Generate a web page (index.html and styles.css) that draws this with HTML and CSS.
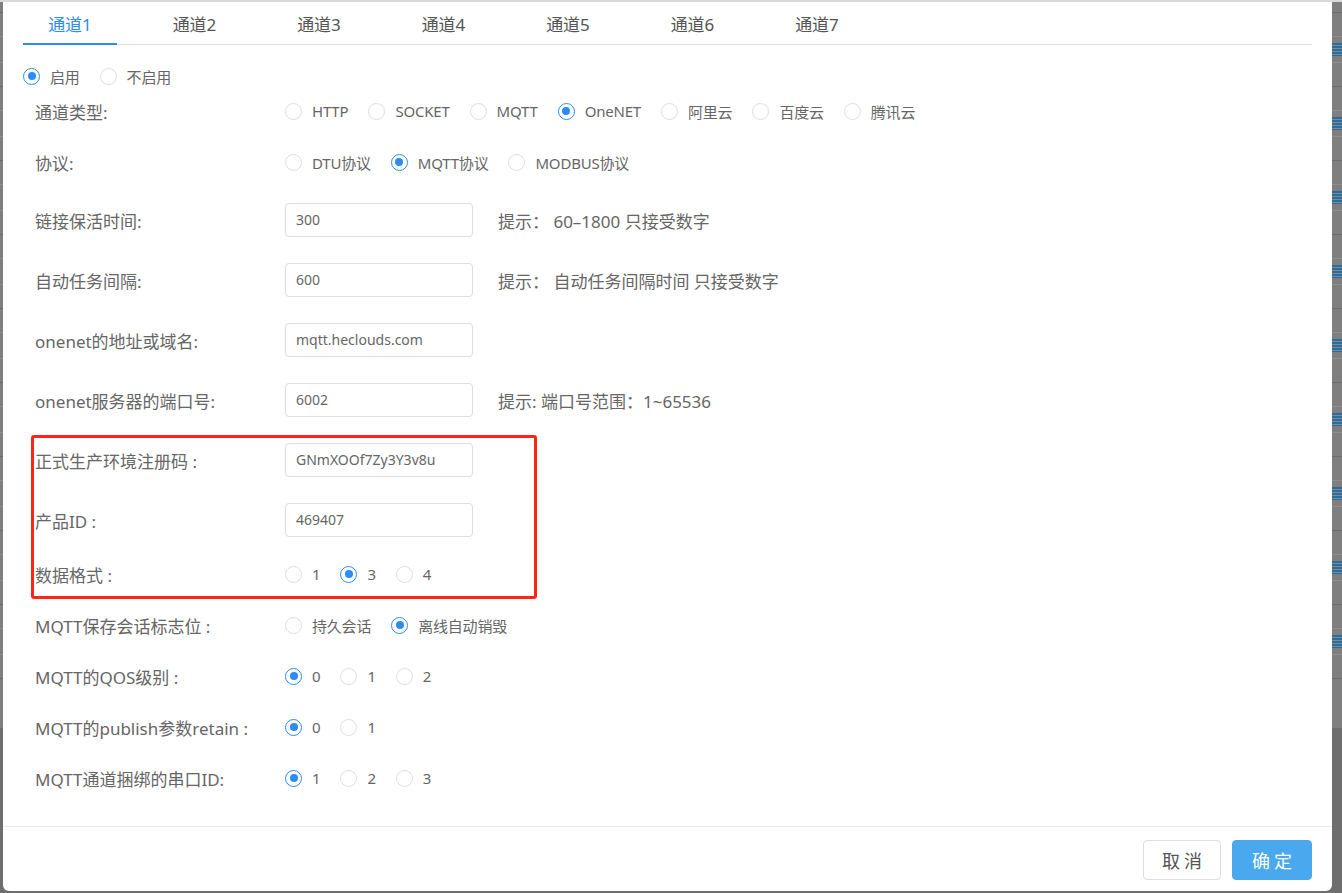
FILE: index.html
```html
<!DOCTYPE html>
<html lang="zh-CN">
<head>
<meta charset="utf-8">
<title>通道配置</title>
<link rel="stylesheet" href="styles.css">
</head>
<body>
<div class="page">
  <div class="page-top"></div>
  <div class="page-head"></div>
  <div class="bg-row"><div class="bg-cell"><span class="bg-icon"></span></div></div>
  <div class="bg-row"><div class="bg-cell"><span class="bg-icon"></span></div></div>
  <div class="bg-row"><div class="bg-cell"><span class="bg-icon"></span></div></div>
  <div class="bg-row"><div class="bg-cell"><span class="bg-icon"></span></div></div>
  <div class="bg-row"><div class="bg-cell"><span class="bg-icon"></span></div></div>
  <div class="bg-row"><div class="bg-cell"><span class="bg-icon"></span></div></div>
  <div class="bg-row"><div class="bg-cell"><span class="bg-icon"></span></div></div>
  <div class="bg-row"><div class="bg-cell"><span class="bg-icon"></span></div></div>
  <div class="bg-row"><div class="bg-cell"><span class="bg-icon"></span></div></div>
  <div class="bg-row bg-row-last"></div>
  <div class="page-foot"></div>
</div>

<div class="modal">
  <div class="modal-body">
    <div class="tabs">
      <div class="tab active">通道1</div>
      <div class="tab">通道2</div>
      <div class="tab">通道3</div>
      <div class="tab">通道4</div>
      <div class="tab">通道5</div>
      <div class="tab">通道6</div>
      <div class="tab">通道7</div>
    </div>

    <div class="enable-row">
      <label class="radio checked"><span class="circle"></span><span class="rtext">启用</span></label>
      <label class="radio"><span class="circle"></span><span class="rtext">不启用</span></label>
    </div>

    <div class="form">
      <div class="item item-radio">
        <div class="label">通道类型:</div>
        <div class="control">
          <label class="radio"><span class="circle"></span><span class="rtext">HTTP</span></label>
          <label class="radio"><span class="circle"></span><span class="rtext">SOCKET</span></label>
          <label class="radio"><span class="circle"></span><span class="rtext">MQTT</span></label>
          <label class="radio checked"><span class="circle"></span><span class="rtext">OneNET</span></label>
          <label class="radio"><span class="circle"></span><span class="rtext">阿里云</span></label>
          <label class="radio"><span class="circle"></span><span class="rtext">百度云</span></label>
          <label class="radio"><span class="circle"></span><span class="rtext">腾讯云</span></label>
        </div>
      </div>

      <div class="item item-radio item-gap">
        <div class="label">协议:</div>
        <div class="control">
          <label class="radio"><span class="circle"></span><span class="rtext">DTU协议</span></label>
          <label class="radio checked"><span class="circle"></span><span class="rtext">MQTT协议</span></label>
          <label class="radio"><span class="circle"></span><span class="rtext">MODBUS协议</span></label>
        </div>
      </div>

      <div class="item item-input">
        <div class="label">链接保活时间:</div>
        <div class="control">
          <div class="input">300</div>
          <div class="hint">提示： 60–1800 只接受数字</div>
        </div>
      </div>

      <div class="item item-input">
        <div class="label">自动任务间隔:</div>
        <div class="control">
          <div class="input">600</div>
          <div class="hint">提示： 自动任务间隔时间 只接受数字</div>
        </div>
      </div>

      <div class="item item-input">
        <div class="label">onenet的地址或域名:</div>
        <div class="control">
          <div class="input">mqtt.heclouds.com</div>
        </div>
      </div>

      <div class="item item-input">
        <div class="label">onenet服务器的端口号:</div>
        <div class="control">
          <div class="input">6002</div>
          <div class="hint">提示: 端口号范围：1~65536</div>
        </div>
      </div>

      <div class="item item-input">
        <div class="label">正式生产环境注册码 :</div>
        <div class="control">
          <div class="input">GNmXOOf7Zy3Y3v8u</div>
        </div>
      </div>

      <div class="item item-input">
        <div class="label">产品ID :</div>
        <div class="control">
          <div class="input">469407</div>
        </div>
      </div>

      <div class="item item-radio">
        <div class="label">数据格式 :</div>
        <div class="control">
          <label class="radio"><span class="circle"></span><span class="rtext">1</span></label>
          <label class="radio checked"><span class="circle"></span><span class="rtext">3</span></label>
          <label class="radio"><span class="circle"></span><span class="rtext">4</span></label>
        </div>
      </div>

      <div class="item item-radio">
        <div class="label">MQTT保存会话标志位 :</div>
        <div class="control">
          <label class="radio"><span class="circle"></span><span class="rtext">持久会话</span></label>
          <label class="radio checked"><span class="circle"></span><span class="rtext">离线自动销毁</span></label>
        </div>
      </div>

      <div class="item item-radio">
        <div class="label">MQTT的QOS级别 :</div>
        <div class="control">
          <label class="radio checked"><span class="circle"></span><span class="rtext">0</span></label>
          <label class="radio"><span class="circle"></span><span class="rtext">1</span></label>
          <label class="radio"><span class="circle"></span><span class="rtext">2</span></label>
        </div>
      </div>

      <div class="item item-radio">
        <div class="label">MQTT的publish参数retain :</div>
        <div class="control">
          <label class="radio checked"><span class="circle"></span><span class="rtext">0</span></label>
          <label class="radio"><span class="circle"></span><span class="rtext">1</span></label>
        </div>
      </div>

      <div class="item item-radio">
        <div class="label">MQTT通道捆绑的串口ID:</div>
        <div class="control">
          <label class="radio checked"><span class="circle"></span><span class="rtext">1</span></label>
          <label class="radio"><span class="circle"></span><span class="rtext">2</span></label>
          <label class="radio"><span class="circle"></span><span class="rtext">3</span></label>
        </div>
      </div>
    </div>

    <div class="highlight"></div>
  </div>

  <div class="modal-footer">
    <button class="btn">取 消</button>
    <button class="btn btn-primary">确 定</button>
  </div>
</div>
</body>
</html>
```

FILE: styles.css
```css
* { box-sizing: border-box; }

html, body {
  margin: 0;
  padding: 0;
}

body {
  width: 1342px;
  height: 893px;
  overflow: hidden;
  position: relative;
  background: #6e6e6e;
  font-family: "Noto Sans", "Noto Sans CJK SC", sans-serif;
  color: #666;
}

/* ---------- dimmed page behind the dialog ---------- */
.page {
  display: flex;
  flex-direction: column;
  width: 100%;
  background: #7f7f7f;
}
.page-top {
  height: 2px;
  background: #dadada;
}
.page-head {
  height: 10px;
}
.bg-row {
  height: 74px;
  border-top: 1px solid #6c6c6c;
  display: flex;
  flex-direction: column;
}
.bg-row-last {
  height: 50px;
}
.bg-cell {
  margin-top: 23px;
  height: 27px;
  border-top: 1px solid #8e8e8e;
  border-bottom: 1px solid #8e8e8e;
  display: flex;
  justify-content: flex-end;
  align-items: center;
}
.bg-icon {
  width: 12px;
  height: 13px;
  background: repeating-linear-gradient(#2b6e9e 0 2px, #7f8a94 2px 3px);
}
.page-foot {
  flex: 1;
  height: 100px;
  background: #6e6e6e;
}

/* ---------- dialog ---------- */
.modal {
  position: absolute;
  left: 3px;
  top: 2px;
  width: 1329px;
  height: 889px;
  background: #fff;
  border-radius: 0 0 6px 6px;
  display: flex;
  flex-direction: column;
}

.modal-body {
  position: relative;
  flex: 1;
  padding: 0 20px;
}

.tabs {
  display: flex;
  height: 43px;
  border-bottom: 1px solid #dcdee2;
}
.tab {
  width: 94px;
  margin-right: 30.5px;
  padding-top: 4px;
  line-height: 37px;
  text-align: center;
  font-size: 17px;
  color: #555;
}
.tab.active {
  color: #2d8cf0;
  border-bottom: 2px solid #2d8cf0;
  margin-bottom: -1px;
}

.enable-row {
  display: flex;
  align-items: center;
  height: 20px;
  margin-top: 21px;
  margin-bottom: 12px;
}

/* radios */
.radio {
  display: inline-flex;
  align-items: center;
  margin-right: 20px;
  font-size: 15px;
  letter-spacing: -0.2px;
  color: #666;
}
.circle {
  width: 17px;
  height: 17px;
  border: 1px solid #dcdee2;
  border-radius: 50%;
  margin-right: 10px;
  display: inline-flex;
  align-items: center;
  justify-content: center;
  flex: none;
}
.radio.checked .circle {
  border-color: #2d8cf0;
}
.radio.checked .circle::after {
  content: "";
  width: 8px;
  height: 8px;
  border-radius: 50%;
  background: #2d8cf0;
}

/* form rows */
.form {
  display: flex;
  flex-direction: column;
}
.item {
  display: flex;
  align-items: center;
}
.item-radio {
  height: 26px;
  margin-bottom: 25px;
}
.item-gap {
  margin-bottom: 28px;
}
.item-input {
  height: 34px;
  margin-bottom: 26px;
}
.item-input + .item-radio {
  margin-top: -2px;
}
.label {
  width: 262px;
  padding-left: 12px;
  font-size: 17px;
  color: #666;
  white-space: nowrap;
}
.control {
  display: flex;
  align-items: center;
}
.input {
  width: 188px;
  height: 34px;
  border: 1px solid #dcdee2;
  border-radius: 4px;
  padding: 0 10px;
  font-size: 14px;
  line-height: 32px;
  color: #666;
}
.hint {
  margin-left: 25px;
  font-size: 17px;
  color: #666;
}

.highlight {
  position: absolute;
  left: 28px;
  top: 433px;
  width: 506px;
  height: 164px;
  border: 3px solid #ff2318;
  border-radius: 3px;
  pointer-events: none;
}

/* footer */
.modal-footer {
  height: 65px;
  border-top: 1px solid #e8eaec;
  padding: 13px 20px 0;
  display: flex;
  justify-content: flex-end;
  align-items: flex-start;
}
.btn {
  width: 78px;
  height: 40px;
  border-radius: 4px;
  background: #fff;
  border: 1px solid #dcdee2;
  color: #555;
  font-family: "Noto Sans CJK SC", sans-serif;
  font-size: 18px;
  cursor: pointer;
}
.btn + .btn {
  margin-left: 11px;
}
.btn-primary {
  width: 80px;
  background: #4aa8ee;
  border-color: #4aa8ee;
  color: #fff;
}
```
